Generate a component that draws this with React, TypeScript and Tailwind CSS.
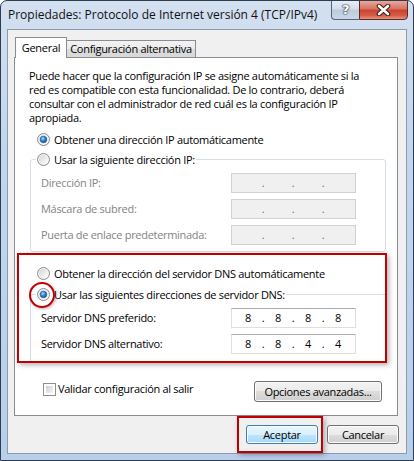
import { useId } from 'react';

const font = "font-['Open_Sans',sans-serif]";

function useSvgId() {
  return useId().replace(/[^a-zA-Z0-9]/g, '');
}

function Radio({ checked = false }: { checked?: boolean }) {
  const id = useSvgId();
  return (
    <svg width="13" height="13" viewBox="0 0 13 13" className="shrink-0">
      <defs>
        <linearGradient id={`bg${id}`} x1="0" y1="0" x2="1" y2="1">
          <stop offset="0" stopColor="#d4d4d4" />
          <stop offset="1" stopColor="#ffffff" />
        </linearGradient>
        <radialGradient id={`dot${id}`} cx="0.4" cy="0.35" r="0.7">
          <stop offset="0" stopColor="#a9e3ff" />
          <stop offset="0.45" stopColor="#2f8fd8" />
          <stop offset="1" stopColor="#114f8c" />
        </radialGradient>
      </defs>
      <circle cx="6.5" cy="6.5" r="6" fill="#f4f4f4" stroke="#8a8a8a" />
      <circle cx="6.5" cy="6.5" r="4.6" fill={`url(#bg${id})`} />
      {checked && <circle cx="6.5" cy="6.5" r="3.3" fill={`url(#dot${id})`} stroke="#1d4f80" strokeWidth="0.6" />}
    </svg>
  );
}

function Checkbox() {
  return (
    <div className="w-[13px] h-[13px] border border-[#8e8f8f] bg-white p-[2px] shrink-0">
      <div className="w-full h-full bg-[linear-gradient(135deg,#cbcfd5,#f7f7f7)]" />
    </div>
  );
}

function RadioRow({ checked, label }: { checked?: boolean; label: string }) {
  return (
    <div className="flex items-center h-[15px]">
      <Radio checked={checked} />
      <span className="ml-[4px] whitespace-nowrap">{label}</span>
    </div>
  );
}

function IpBox({ values, disabled = false }: { values: string[]; disabled?: boolean }) {
  return (
    <div
      className={`w-[125px] h-[20px] border flex items-center pl-[5px] ${
        disabled
          ? 'bg-[#f0f0f0] border-[#d2d2d2] text-[#6d6d6d]'
          : 'bg-white border-[#dbdfe6] border-t-[#abadb3] text-black'
      }`}
    >
      {values.map((v, i) => (
        <div key={i} className="flex items-center">
          <span className="w-[22px] text-center leading-[16px]">{v}</span>
          {i < 3 && <span className="w-[8px] text-center leading-[16px]">.</span>}
        </div>
      ))}
    </div>
  );
}

function IpRow({ label, values, disabled }: { label: string; values: string[]; disabled?: boolean }) {
  return (
    <div className="flex items-center justify-between h-[20px]">
      <span className={disabled ? 'text-[#838383]' : 'text-black'}>{label}</span>
      <IpBox values={values} disabled={disabled} />
    </div>
  );
}

function WinButton({ label, isDefault = false, className = '' }: { label: string; isDefault?: boolean; className?: string }) {
  return (
    <button
      className={`rounded-[3px] border flex items-center justify-center shadow-[inset_0_0_0_1px_#fcfcfc] ${
        isDefault
          ? 'border-[#3c7fb1] bg-[linear-gradient(180deg,#eaf6fd_0%,#d9f0fc_50%,#bee6fd_50%,#a7d9f5_100%)]'
          : 'border-[#707070] bg-[linear-gradient(180deg,#f2f2f2_0%,#ebebeb_50%,#dddddd_50%,#cfcfcf_100%)]'
      } ${className}`}
    >
      {label}
    </button>
  );
}

export default function App() {
  const empty = ['', '', '', ''];
  return (
    <div
      className={`${font} text-[11px] leading-[14px] tracking-[-0.3px] text-black w-[414px] h-[461px] overflow-hidden flex flex-col rounded-t-[7px] border border-[#2f3d50] bg-[linear-gradient(180deg,#d3e0f0_0%,#c2d6ee_30%,#b8cfeb_100%)]`}
    >
      {/* Title bar */}
      <div className="h-[28px] flex items-start shrink-0">
        <span className="pl-[7px] pt-[6px] text-[12px] leading-[16px] tracking-normal text-[#111] whitespace-nowrap">
          Propiedades: Protocolo de Internet versión 4 (TCP/IPv4)
        </span>
        <div className="ml-auto mr-[5px] mt-[-1px] flex">
          <div className="w-[28px] h-[20px] rounded-bl-[4px] border border-[#56677d] border-r-0 bg-[linear-gradient(180deg,#e6edf6_0%,#d3dde9_45%,#bccadb_50%,#cbd7e5_100%)] flex items-center justify-center">
            <span className="font-['DejaVu_Sans',sans-serif] font-bold text-[13px] leading-[14px] text-white [text-shadow:0_0_1px_#2a3440,0_0_1px_#2a3440,0_0_2px_#2a3440]">?</span>
          </div>
          <div className="w-[49px] h-[20px] rounded-br-[4px] border border-[#5a2a24] bg-[linear-gradient(180deg,#e9a89c_0%,#d8705f_45%,#c7432e_50%,#d35c45_80%,#e8967f_100%)] flex items-center justify-center">
            <svg width="15" height="12" viewBox="0 0 15 12">
              <path d="M3 2 L12 10 M12 2 L3 10" stroke="#3a1d19" strokeWidth="4.6" strokeLinecap="round" />
              <path d="M3 2 L12 10 M12 2 L3 10" stroke="#ffffff" strokeWidth="2.6" strokeLinecap="round" />
            </svg>
          </div>
        </div>
      </div>

      {/* Client area */}
      <div className="mx-[6px] h-[425px] border border-[#8d9aab] bg-[#f0f0f0] flex flex-col">
        <div className="ml-[6px] mt-[7px] w-[384px] flex flex-col">
          {/* Tabs */}
          <div className="flex items-end pl-[1px] h-[20px] relative z-10">
            <div className="w-[52px] h-[21px] mb-[-1px] bg-white border border-b-0 border-[#898c95] flex items-center justify-center whitespace-nowrap">
              General
            </div>
            <div className="w-[129px] h-[17px] border-t border-r border-[#898c95] bg-[linear-gradient(180deg,#f2f2f2_0%,#ebebeb_50%,#dddddd_50%,#d8d8d8_100%)] flex items-center justify-center whitespace-nowrap">
              Configuración alternativa
            </div>
          </div>

          {/* Panel */}
          <div className="h-[359px] border border-[#898c95] bg-white flex flex-col">
            <p className="pt-[11px] pl-[14px] whitespace-nowrap">
              Puede hacer que la configuración IP se asigne automáticamente si la
              <br />
              red es compatible con esta funcionalidad. De lo contrario, deberá
              <br />
              consultar con el administrador de red cuál es la configuración IP
              <br />
              apropiada.
            </p>

            <div className="mt-[7px] pl-[22px]">
              <RadioRow checked label="Obtener una dirección IP automáticamente" />
            </div>

            <fieldset className="mt-[5px] ml-[15px] w-[356px] border border-[#d5dfe5] rounded-[3px] pt-[6px] pb-[6px] pl-[10px] pr-[29px]">
              <legend className="ml-[-5px] px-[1px]">
                <RadioRow label="Usar la siguiente dirección IP:" />
              </legend>
              <div className="flex flex-col gap-[6px]">
                <IpRow label="Dirección IP:" values={empty} disabled />
                <IpRow label="Máscara de subred:" values={empty} disabled />
                <IpRow label="Puerta de enlace predeterminada:" values={empty} disabled />
              </div>
            </fieldset>

            {/* DNS (highlighted) */}
            <div className="mt-[1px] ml-[2px] w-[370px] h-[110px] border-2 border-[#c00000] shadow-[2px_2px_5px_rgba(0,0,0,0.3)] flex flex-col pt-[11px]">
              <div className="pl-[18px]">
                <RadioRow label="Obtener la dirección del servidor DNS automáticamente" />
              </div>
              <fieldset className="mt-[6px] ml-[11px] flex-1 border-t border-l border-[#d5dfe5] rounded-tl-[3px] pt-[6px] pl-[10px] pr-[29px]">
                <legend className="ml-[-5px] px-[1px]">
                  <div className="flex items-center h-[15px]">
                    <div className="relative">
                      <Radio checked />
                      <div className="absolute left-[-8px] top-[-6px] w-[26px] h-[26px] rounded-full border-2 border-[#c00000] shadow-[1px_1px_3px_rgba(0,0,0,0.3)]" />
                    </div>
                    <span className="ml-[4px] whitespace-nowrap">Usar las siguientes direcciones de servidor DNS:</span>
                  </div>
                </legend>
                <div className="flex flex-col gap-[6px]">
                  <IpRow label="Servidor DNS preferido:" values={['8', '8', '8', '8']} />
                  <IpRow label="Servidor DNS alternativo:" values={['8', '8', '4', '4']} />
                </div>
              </fieldset>
            </div>

            <div className="mt-[18px] flex items-start pl-[28px] pr-[15px]">
              <div className="mt-[1px] flex items-center">
                <Checkbox />
                <span className="ml-[2px]">Validar configuración al salir</span>
              </div>
              <WinButton label="Opciones avanzadas..." className="ml-auto w-[128px] h-[21px]" />
            </div>
          </div>
        </div>

        {/* Dialog buttons */}
        <div className="flex items-start justify-end pr-[7px]">
          <div className="w-[86px] h-[37px] border-2 border-[#c00000] shadow-[2px_2px_5px_rgba(0,0,0,0.3)] pl-[7px] pt-[7px]">
            <WinButton label="Aceptar" isDefault className="w-[72px] h-[19px]" />
          </div>
          <WinButton label="Cancelar" className="ml-[4px] mt-[9px] w-[72px] h-[19px]" />
        </div>
      </div>
    </div>
  );
}
